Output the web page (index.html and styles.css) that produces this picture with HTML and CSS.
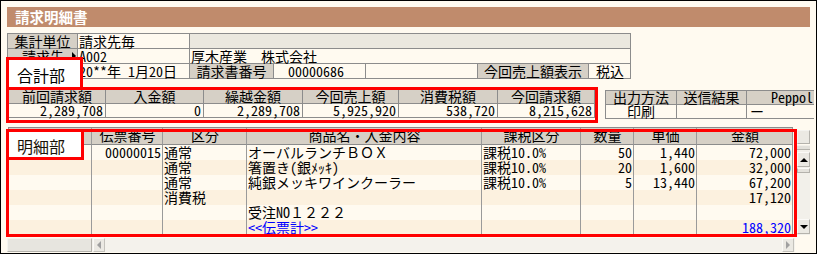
FILE: index.html
```html
<!DOCTYPE html>
<html lang="ja">
<head>
<meta charset="utf-8">
<title>請求明細書</title>
<link rel="stylesheet" href="styles.css">
</head>
<body>
<div class="frame">
  <div class="titlebar">請求明細書</div>

  <div class="info">
    <div class="irow r1">
      <div class="c lbl">集計単位</div>
      <div class="c">請求先毎</div>
      <div class="c blank"></div>
    </div>
    <div class="irow r2">
      <div class="c lbl lbl-arrow"><span>請求先</span><span class="tri"></span></div>
      <div class="c">A002</div>
      <div class="c">厚木産業　株式会社</div>
    </div>
    <div class="irow r3">
      <div class="c lbl">請求日</div>
      <div class="c">20**年 1月20日</div>
      <div class="c lbl">請求書番号</div>
      <div class="c pad14">00000686</div>
      <div class="c"></div>
      <div class="c lbl">今回売上額表示</div>
      <div class="c ctr">税込</div>
    </div>
  </div>

  <div class="sumrow">
    <div class="summary">
      <div class="sh">前回請求額</div>
      <div class="sh">入金額</div>
      <div class="sh">繰越金額</div>
      <div class="sh">今回売上額</div>
      <div class="sh">消費税額</div>
      <div class="sh">今回請求額</div>
      <div class="sv">2,289,708</div>
      <div class="sv">0</div>
      <div class="sv">2,289,708</div>
      <div class="sv">5,925,920</div>
      <div class="sv">538,720</div>
      <div class="sv">8,215,628</div>
    </div>
    <div class="output">
      <div class="sh">出力方法</div>
      <div class="sh">送信結果</div>
      <div class="sh pep">Peppol</div>
      <div class="ov ctr">印刷</div>
      <div class="ov"></div>
      <div class="ov dash pep">ー</div>
    </div>
  </div>

  <div class="detail">
    <div class="dtable">
      <div class="drow dhead">
        <div></div>
        <div>伝票番号</div>
        <div>区分</div>
        <div>商品名・入金内容</div>
        <div>課税区分</div>
        <div>数量</div>
        <div>単価</div>
        <div>金額</div>
      </div>
      <div class="drow">
        <div></div>
        <div class="rt">00000015</div>
        <div>通常</div>
        <div>オーバルランチＢＯＸ</div>
        <div>課税10.0%</div>
        <div class="rt">50</div>
        <div class="rt">1,440</div>
        <div class="rt">72,000</div>
      </div>
      <div class="drow alt">
        <div></div>
        <div></div>
        <div>通常</div>
        <div>箸置き(銀ﾒｯｷ)</div>
        <div>課税10.0%</div>
        <div class="rt">20</div>
        <div class="rt">1,600</div>
        <div class="rt">32,000</div>
      </div>
      <div class="drow">
        <div></div>
        <div></div>
        <div>通常</div>
        <div>純銀メッキワインクーラー</div>
        <div>課税10.0%</div>
        <div class="rt">5</div>
        <div class="rt">13,440</div>
        <div class="rt">67,200</div>
      </div>
      <div class="drow alt">
        <div></div>
        <div></div>
        <div>消費税</div>
        <div></div>
        <div></div>
        <div></div>
        <div></div>
        <div class="rt">17,120</div>
      </div>
      <div class="drow">
        <div></div>
        <div></div>
        <div></div>
        <div>受注NO１２２２</div>
        <div></div>
        <div></div>
        <div></div>
        <div></div>
      </div>
      <div class="drow alt">
        <div></div>
        <div></div>
        <div></div>
        <div class="blue">&lt;&lt;伝票計&gt;&gt;</div>
        <div></div>
        <div></div>
        <div></div>
        <div class="rt blue">188,320</div>
      </div>
    </div>
    <div class="vscroll">
      <div class="vs-top"></div>
      <div class="vs-track">
        <div class="vs-line"></div>
        <div class="vs-btn"><span class="arr-up"></span></div>
        <div class="vs-thumb"></div>
        <div class="vs-fill"></div>
        <div class="vs-btn"><span class="arr-down"></span></div>
      </div>
    </div>
  </div>

  <div class="hscroll">
    <div class="hs-left"></div>
    <div class="hs-track">
      <div class="hs-btn"><span class="arr-left"></span></div>
      <div class="hs-btn"><span class="arr-right"></span></div>
    </div>
  </div>

  <div class="redbox rb-sum"></div>
  <div class="redbox rb-det"></div>
  <div class="tag tag-sum">合計部</div>
  <div class="tag tag-det">明細部</div>
</div>
</body>
</html>
```

FILE: styles.css
```css
body {
  margin: 0;
  background: #ffffff;
}

.frame {
  position: relative;
  width: 817px;
  height: 254px;
  box-sizing: border-box;
  border: 1px solid #000;
  background: #fffaf0;
  padding: 6px 6px 0 6px;
  overflow: hidden;
  font-family: "Noto Sans Mono CJK JP", "Noto Sans CJK JP", sans-serif;
  font-size: 14px;
  color: #000;
}

.titlebar {
  height: 20px;
  background: #c08b6c;
  color: #fff;
  font-family: "Noto Sans CJK JP", sans-serif;
  font-weight: bold;
  font-size: 14.5px;
  line-height: 20px;
  padding-left: 8px;
}

/* header info block */
.info {
  margin-top: 6px;
  width: 624px;
  box-sizing: border-box;
  border-top: 1px solid #8c8c8c;
  border-left: 1px solid #8c8c8c;
}
.irow {
  display: grid;
  height: 15px;
}
.r1, .r2 { grid-template-columns: 70px 112px 441px; }
.r3 { grid-template-columns: 70px 112px 84px 92px 112px 111px 42px; }

.c {
  box-sizing: border-box;
  height: 15px;
  border-right: 1px solid #8c8c8c;
  border-bottom: 1px solid #8c8c8c;
  line-height: 14px;
  padding-left: 1px;
  white-space: nowrap;
}
.lbl {
  background: #d6d0c6;
  text-align: center;
  padding-left: 0;
}
.lbl-arrow {
  display: flex;
  justify-content: space-between;
  align-items: center;
  padding: 0 1px 0 14px;
}
.tri {
  width: 0;
  height: 0;
  border-left: 4px solid #000;
  border-top: 4px solid transparent;
  border-bottom: 4px solid transparent;
}
.blank { background: #ebe8df; }
.pad14 { padding-left: 14px; }
.ctr { text-align: center; }

/* summary row */
.sumrow {
  display: flex;
  align-items: flex-start;
  margin-top: 10px;
  margin-left: 1px;
}
.summary {
  display: grid;
  grid-template-columns: 97px 98px 99px 96px 99px 97px;
  border-top: 1px solid #8c8c8c;
  border-left: 1px solid #8c8c8c;
}
.output {
  display: grid;
  grid-template-columns: 71px 70px 67px;
  margin-left: 10px;
  margin-top: 1px;
  border-top: 1px solid #8c8c8c;
  border-left: 1px solid #8c8c8c;
}
.sh, .sv, .ov {
  box-sizing: border-box;
  height: 14px;
  line-height: 13px;
  border-right: 1px solid #8c8c8c;
  border-bottom: 1px solid #8c8c8c;
  white-space: nowrap;
}
.sh {
  background: #d6d0c6;
  text-align: center;
}
.sv {
  text-align: right;
  padding-right: 2px;
}
.output .pep {
  border-right: none;
}
.output .sh.pep {
  text-align: right;
  padding-right: 1px;
}
.dash { padding-left: 3px; }

/* detail */
.detail {
  display: flex;
  align-items: flex-start;
  margin-top: 8px;
  margin-left: 1px;
}
.dtable {
  width: 785px;
  box-sizing: border-box;
  border-top: 1px solid #8c8c8c;
  border-left: 1px solid #8c8c8c;
}
.drow {
  display: grid;
  grid-template-columns: 83px 71px 84px 235px 99px 53px 63px 96px;
  height: 15px;
  background: #fffaf0;
}
.drow.alt { background: #fcf1df; }
.drow > div {
  box-sizing: border-box;
  border-right: 1px solid #9a9a9a;
  line-height: 15px;
  padding-left: 1px;
  white-space: nowrap;
}
.drow > .rt {
  text-align: right;
  padding-left: 0;
  padding-right: 1px;
}
.dhead {
  height: 17px;
  background: #d6d0c6;
}
.dhead > div {
  border-bottom: 1px solid #8c8c8c;
  line-height: 14px;
  text-align: center;
}
.blue { color: #0000ff; }

.vscroll {
  width: 14px;
  margin-left: 4px;
  margin-top: 3px;
}
.vs-top {
  height: 14px;
  box-sizing: border-box;
  background: #ebe9e3;
  border: 1px solid #b4b2ac;
  border-top-color: #f4f3ef;
  border-left-color: #f4f3ef;
}
.vs-track {
  margin-top: 1px;
  height: 90px;
  display: flex;
  flex-direction: column;
  background: #f2f0ea;
}
.vs-line {
  height: 3px;
  margin-top: 1px;
  background: #e2e0da;
  border-bottom: 1px solid #b4b2ac;
}
.vs-btn {
  height: 15px;
  box-sizing: border-box;
  margin-top: 2px;
  background: #ebe9e3;
  border: 1px solid #b4b2ac;
  border-top-color: #fbfaf7;
  border-left-color: #fbfaf7;
  display: flex;
  align-items: center;
  justify-content: center;
}
.vs-thumb {
  height: 5px;
  box-sizing: border-box;
  margin-top: 1px;
  background: #e4e2dc;
  border: 1px solid #b4b2ac;
  border-top-color: #fbfaf7;
}
.vs-fill { flex: 1; }
.vs-btn:last-child { margin-bottom: 1px; }

.arr-up, .arr-down, .arr-left, .arr-right {
  width: 0;
  height: 0;
}
.arr-up {
  border-left: 4px solid transparent;
  border-right: 4px solid transparent;
  border-bottom: 4px solid #000;
}
.arr-down {
  border-left: 4px solid transparent;
  border-right: 4px solid transparent;
  border-top: 4px solid #000;
}
.arr-left {
  border-top: 4px solid transparent;
  border-bottom: 4px solid transparent;
  border-right: 4px solid #a0a0a0;
}
.arr-right {
  border-top: 4px solid transparent;
  border-bottom: 4px solid transparent;
  border-left: 4px solid #a0a0a0;
}

.hscroll {
  display: flex;
  margin-top: 3px;
  height: 14px;
}
.hs-left {
  width: 85px;
  box-sizing: border-box;
  background: #e7e5df;
  border: 1px solid #b4b2ac;
  border-top-color: #f4f3ef;
  border-left-color: #f4f3ef;
}
.hs-track {
  width: 703px;
  display: flex;
  justify-content: space-between;
  background: #f4f2ec;
  padding: 0 1px;
  box-sizing: border-box;
}
.hs-btn {
  width: 12px;
  height: 14px;
  box-sizing: border-box;
  background: #ebe9e3;
  border: 1px solid #c4c2bc;
  border-top-color: #fbfaf7;
  border-left-color: #fbfaf7;
  display: flex;
  align-items: center;
  justify-content: center;
}

/* red annotation overlays */
.redbox {
  position: absolute;
  box-sizing: border-box;
  border: 3px solid #ff0000;
  pointer-events: none;
}
.rb-sum {
  left: 5px;
  top: 86px;
  width: 592px;
  height: 36px;
}
.rb-det {
  left: 5px;
  top: 128px;
  width: 791px;
  height: 108px;
}
.tag {
  position: absolute;
  box-sizing: border-box;
  border: 3px solid #ff0000;
  background: #fff;
  font-family: "Noto Sans CJK JP", sans-serif;
  font-size: 16px;
  line-height: 18px;
  padding-left: 8px;
  color: #000;
}
.tag-sum {
  left: 5px;
  top: 56px;
  width: 77px;
  height: 33px;
  padding-top: 6px;
}
.tag-det {
  left: 5px;
  top: 128px;
  width: 78px;
  height: 31px;
  padding-top: 5px;
  color: #1a1208;
}
```
